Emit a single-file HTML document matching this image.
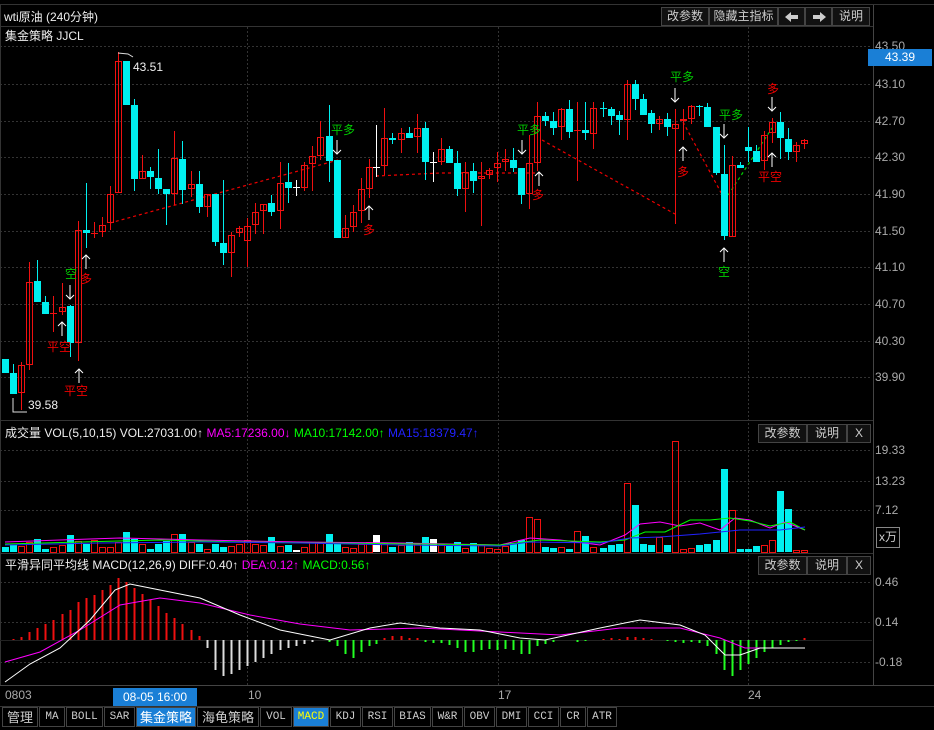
<!DOCTYPE html>
<html><head><meta charset="utf-8"><style>
*{margin:0;padding:0;box-sizing:border-box}
body{width:934px;height:730px;background:#000;overflow:hidden;position:relative;font-family:"Liberation Sans","Noto Sans CJK SC",sans-serif;font-size:12px;color:#ddd}
.a{position:absolute;white-space:nowrap}
.btn{position:absolute;border:1px solid #444;background:#111;color:#ccc;font-size:12px;text-align:center;line-height:17px;height:19px}
.tab{position:absolute;top:707px;height:20px;border:1px solid #444;color:#ccc;font-size:11px;text-align:center;line-height:18px;font-family:"Liberation Mono","Noto Sans CJK SC",monospace}
.ax{position:absolute;left:875px;color:#aaa;font-size:12px}
</style></head><body>
<div class="a" style="left:0;top:4px;width:934px;height:1px;background:#333"></div>
<div class="a" style="left:0;top:26px;width:873px;height:1px;background:#333"></div>
<div class="a" style="left:873px;top:5px;width:1px;height:680px;background:#444"></div>
<div class="a" style="left:0;top:420px;width:873px;height:1px;background:#333"></div>
<div class="a" style="left:0;top:553px;width:873px;height:1px;background:#333"></div>
<div class="a" style="left:0;top:685px;width:934px;height:1px;background:#444"></div>
<div class="a" style="left:0;top:706px;width:934px;height:1px;background:#333"></div>
<div class="a" style="left:0;top:5px;width:1px;height:680px;background:#333"></div>

<div class="a" style="left:4px;top:8px;color:#eee">wti原油 (240分钟)</div>
<div class="btn" style="left:661px;top:7px;width:48px">改参数</div>
<div class="btn" style="left:709px;top:7px;width:69px">隐藏主指标</div>
<div class="btn" style="left:778px;top:7px;width:27px"><svg width="14" height="10" style="margin-top:4px"><path d="M0,5L6,0V3H13V7H6V10Z" fill="#ccc"/></svg></div>
<div class="btn" style="left:805px;top:7px;width:27px"><svg width="14" height="10" style="margin-top:4px"><path d="M14,5L8,0V3H1V7H8V10Z" fill="#ccc"/></svg></div>
<div class="btn" style="left:832px;top:7px;width:38px">说明</div>
<div class="a" style="left:5px;top:27px;color:#eee">集金策略 JJCL</div>

<div class="ax" style="top:39px">43.50</div>
<div class="a" style="left:868px;top:49px;width:64px;height:17px;background:#1a7fd6;color:#fff;text-align:center;line-height:17px">43.39</div>
<div class="ax" style="top:77px">43.10</div>
<div class="ax" style="top:114px">42.70</div>
<div class="ax" style="top:150px">42.30</div>
<div class="ax" style="top:187px">41.90</div>
<div class="ax" style="top:224px">41.50</div>
<div class="ax" style="top:260px">41.10</div>
<div class="ax" style="top:297px">40.70</div>
<div class="ax" style="top:334px">40.30</div>
<div class="ax" style="top:370px">39.90</div>

<div class="a" style="left:5px;top:424px;color:#eee">成交量 VOL(5,10,15) VOL:27031.00↑ <span style="color:#f0f">MA5:17236.00↓</span> <span style="color:#0f0">MA10:17142.00↑</span> <span style="color:#22f">MA15:18379.47↑</span></div>
<div class="btn" style="left:758px;top:424px;width:49px">改参数</div>
<div class="btn" style="left:807px;top:424px;width:40px">说明</div>
<div class="btn" style="left:847px;top:424px;width:24px">X</div>
<div class="ax" style="top:443px">19.33</div>
<div class="ax" style="top:474px">13.23</div>
<div class="ax" style="top:503px">7.12</div>
<div class="a" style="left:876px;top:527px;width:24px;height:21px;border:1px solid #888;color:#ccc;text-align:center;line-height:19px">x万</div>

<div class="a" style="left:5px;top:556px;color:#eee">平滑异同平均线 MACD(12,26,9) DIFF:0.40↑ <span style="color:#f0f">DEA:0.12↑</span> <span style="color:#0f0">MACD:0.56↑</span></div>
<div class="btn" style="left:758px;top:556px;width:49px">改参数</div>
<div class="btn" style="left:807px;top:556px;width:40px">说明</div>
<div class="btn" style="left:847px;top:556px;width:24px">X</div>
<div class="ax" style="top:575px">0.46</div>
<div class="ax" style="top:615px">0.14</div>
<div class="ax" style="top:655px">-0.18</div>

<div class="a" style="left:5px;top:688px;color:#aaa">0803</div>
<div class="a" style="left:113px;top:688px;width:84px;height:18px;background:#1a7fd6;color:#fff;text-align:center;line-height:18px">08-05 16:00</div>
<div class="a" style="left:248px;top:688px;color:#aaa">10</div>
<div class="a" style="left:498px;top:688px;color:#aaa">17</div>
<div class="a" style="left:748px;top:688px;color:#aaa">24</div>

<div class="tab" style="left:2px;width:36px;font-size:13px;font-family:'Noto Sans CJK SC',sans-serif">管理</div>
<div class="tab" style="left:39px;width:26px">MA</div>
<div class="tab" style="left:66px;width:37px">BOLL</div>
<div class="tab" style="left:104px;width:31px">SAR</div>
<div class="tab" style="left:136px;width:60px;background:#1a7fd6;color:#fff;font-size:13px;font-family:'Noto Sans CJK SC',sans-serif">集金策略</div>
<div class="tab" style="left:197px;width:62px;font-size:13px;font-family:'Noto Sans CJK SC',sans-serif">海龟策略</div>
<div class="tab" style="left:260px;width:32px">VOL</div>
<div class="tab" style="left:293px;width:36px;background:#1a7fd6;color:#ff0">MACD</div>
<div class="tab" style="left:330px;width:31px">KDJ</div>
<div class="tab" style="left:362px;width:31px">RSI</div>
<div class="tab" style="left:394px;width:37px">BIAS</div>
<div class="tab" style="left:432px;width:31px">W&amp;R</div>
<div class="tab" style="left:464px;width:31px">OBV</div>
<div class="tab" style="left:496px;width:31px">DMI</div>
<div class="tab" style="left:528px;width:31px">CCI</div>
<div class="tab" style="left:560px;width:26px">CR</div>
<div class="tab" style="left:587px;width:30px">ATR</div>

<svg class="a" style="left:0;top:0" width="934" height="730" id="s">
<g stroke="#333" stroke-dasharray="2,2" stroke-width="1">
<line x1="0" y1="46.5" x2="872" y2="46.5"/><line x1="0" y1="84.5" x2="872" y2="84.5"/><line x1="0" y1="121.5" x2="872" y2="121.5"/><line x1="0" y1="157.5" x2="872" y2="157.5"/><line x1="0" y1="194.5" x2="872" y2="194.5"/><line x1="0" y1="231.5" x2="872" y2="231.5"/><line x1="0" y1="267.5" x2="872" y2="267.5"/><line x1="0" y1="304.5" x2="872" y2="304.5"/><line x1="0" y1="341.5" x2="872" y2="341.5"/><line x1="0" y1="377.5" x2="872" y2="377.5"/>
<line x1="247.5" y1="27" x2="247.5" y2="685"/><line x1="498.5" y1="27" x2="498.5" y2="685"/><line x1="748.5" y1="27" x2="748.5" y2="685"/>
<line x1="0" y1="450.5" x2="872" y2="450.5"/><line x1="0" y1="481.5" x2="872" y2="481.5"/><line x1="0" y1="510.5" x2="872" y2="510.5"/>
<line x1="0" y1="582.5" x2="872" y2="582.5"/><line x1="0" y1="622.5" x2="872" y2="622.5"/><line x1="0" y1="662.5" x2="872" y2="662.5"/>
</g>
<g fill="none" stroke-dasharray="3,3" stroke-width="1.2">
<polyline stroke="#e00" points="110,223 338,160"/>
<polyline stroke="#e00" points="376,176 440,173 540,173"/>
<polyline stroke="#e00" points="542,140 675,214"/>
<polyline stroke="#e00" points="683,122 725,200"/>
<polyline stroke="#0c0" points="725,200 772,128"/>
</g>
<g id="c"></g>
<g font-family="Noto Sans CJK SC,sans-serif" font-size="12">
<text x="133" y="71" fill="#eee" font-family="Liberation Sans">43.51</text>
<text x="28" y="409" fill="#eee" font-family="Liberation Sans">39.58</text>
<polyline points="13,398 13,412 27,412" stroke="#ddd" fill="none"/>
<polyline points="118,53 128,54 133,57" stroke="#ddd" fill="none"/>
<text x="47" y="351" fill="#e00">平空</text>
<text x="64" y="395" fill="#e00">平空</text>
<text x="65" y="278" fill="#0c0">空</text>
<text x="80" y="283" fill="#e00">多</text>
<text x="331" y="134" fill="#0c0">平多</text>
<text x="363" y="234" fill="#e00">多</text>
<text x="517" y="134" fill="#0c0">平多</text>
<text x="532" y="199" fill="#e00">多</text>
<text x="670" y="81" fill="#0c0">平多</text>
<text x="677" y="176" fill="#e00">多</text>
<text x="719" y="119" fill="#0c0">平多</text>
<text x="718" y="276" fill="#0c0">空</text>
<text x="767" y="93" fill="#e00">多</text>
<text x="758" y="181" fill="#e00">平空</text>
</g>
<g stroke="#fff" fill="none" stroke-width="1">
<path d="M62,336v-14M58,326l4,-4l4,4"/><path d="M79,383v-14M75,373l4,-4l4,4"/>
<path d="M70,285v14M66,295l4,4l4,-4"/><path d="M86,269v-14M82,259l4,-4l4,4"/>
<path d="M337,140v14M333,150l4,4l4,-4"/><path d="M369,220v-14M365,210l4,-4l4,4"/>
<path d="M522,140v14M518,150l4,4l4,-4"/><path d="M539,186v-14M535,176l4,-4l4,4"/>
<path d="M675,88v14M671,98l4,4l4,-4"/><path d="M683,161v-14M679,151l4,-4l4,4"/>
<path d="M724,124v14M720,134l4,4l4,-4"/><path d="M724,262v-14M720,252l4,-4l4,4"/>
<path d="M772,97v14M768,107l4,4l4,-4"/><path d="M772,167v-14M768,157l4,-4l4,4"/>
</g>
<line x1="0" y1="640.5" x2="872" y2="640.5" stroke="#222"/>
<g id="v"></g>
<g id="m"></g>
<polyline fill="none" stroke="#f0f" points="5,542 60,540 120,538 200,540 300,542 400,543 500,545 530,538 560,540 600,545 625,535 640,524 660,522 680,526 700,523 720,530 735,518 750,520 770,528 785,522 805,530"/>
<polyline fill="none" stroke="#0f0" points="5,544 80,542 160,540 240,542 320,543 420,544 500,545 540,540 600,542 625,540 645,532 665,532 690,520 710,520 730,518 750,521 770,526 790,522 805,530"/>
<polyline fill="none" stroke="#22f" points="5,545 100,543 200,542 300,543 400,545 500,546 530,542 600,543 630,538 660,537 700,534 740,530 780,530 805,527"/>
<polyline fill="none" stroke="#f0f" points="5,662 40,652 80,630 120,605 160,598 200,603 250,615 300,624 350,630 420,628 500,632 560,635 620,628 680,628 720,638 745,648 780,648 805,648"/>
<polyline fill="none" stroke="#fff" points="5,682 30,664 60,648 90,620 115,590 130,584 160,590 200,598 240,615 280,630 330,640 370,628 400,623 440,628 480,630 520,638 545,640 600,628 640,620 680,625 705,635 725,655 740,655 760,648 805,648"/>
</svg>
<script>
var C=[[5,359,373,359,373,'c'],[13,373,394,364,394,'c'],[21,365,393,362,410,'r'],[29,282,365,262,370,'r'],[37,281,302,260,302,'c'],[45,302,314,296,314,'c'],[53,313,313,296,332,'x'],[62,307,312,283,315,'r'],[70,306,343,305,357,'c'],[78,230,343,221,361,'r'],[86,230,233,183,248,'c'],[94,233,233,222,238,'x'],[102,225,232,217,237,'r'],[110,194,223,186,230,'r'],[118,61,193,52,193,'r'],[126,61,105,61,105,'c'],[134,105,179,99,191,'c'],[142,171,179,155,179,'r'],[150,171,177,167,189,'c'],[158,178,189,149,194,'c'],[166,189,194,189,225,'c'],[174,158,194,131,205,'r'],[182,159,190,141,204,'c'],[191,184,189,171,197,'r'],[199,184,207,171,213,'c'],[207,194,207,194,217,'r'],[215,194,242,194,246,'c'],[223,243,253,180,265,'c'],[231,235,253,232,277,'r'],[239,228,233,226,237,'r'],[247,226,241,218,267,'r'],[255,212,225,203,234,'r'],[263,204,211,204,234,'r'],[271,203,212,195,216,'c'],[280,183,211,162,229,'r'],[288,182,188,163,203,'c'],[296,187,187,180,196,'w'],[304,165,188,162,191,'r'],[312,156,164,146,191,'r'],[320,137,156,121,160,'r'],[329,136,161,105,182,'c'],[337,160,238,160,238,'c'],[345,228,238,215,238,'r'],[353,212,227,205,232,'r'],[361,189,211,178,223,'r'],[369,167,189,159,198,'r'],[376,167,167,125,177,'w'],[384,138,166,108,175,'r'],[392,138,140,133,144,'c'],[401,133,140,128,153,'r'],[409,133,138,127,138,'c'],[417,128,137,114,153,'r'],[425,128,162,122,180,'c'],[433,162,162,152,182,'w'],[441,149,162,138,165,'r'],[449,149,163,146,163,'c'],[457,163,189,151,196,'c'],[465,172,189,162,212,'r'],[473,171,181,163,193,'c'],[481,176,179,162,226,'r'],[489,170,175,168,179,'r'],[497,163,168,152,182,'r'],[505,159,162,149,171,'r'],[513,160,168,148,172,'c'],[521,168,195,168,204,'c'],[529,163,194,135,209,'r'],[537,116,163,102,171,'r'],[545,116,121,112,126,'c'],[553,121,128,112,135,'c'],[561,109,127,108,140,'r'],[569,109,132,100,138,'c'],[577,130,130,102,181,'x'],[585,130,133,102,140,'c'],[593,108,134,102,149,'r'],[603,108,108,102,117,'y'],[611,109,116,107,125,'c'],[619,115,120,111,135,'c'],[627,84,120,80,140,'r'],[635,84,99,80,110,'c'],[643,99,115,94,115,'c'],[651,113,124,110,133,'c'],[659,119,124,116,130,'r'],[667,119,127,113,136,'c'],[675,124,129,109,224,'r'],[683,119,121,109,140,'r'],[691,106,119,105,124,'r'],[699,106,106,105,116,'y'],[707,107,127,103,127,'c'],[716,127,173,127,175,'c'],[724,174,236,145,240,'c'],[732,165,237,156,237,'r'],[740,165,168,162,168,'c'],[748,147,151,127,162,'c'],[756,151,162,145,162,'c'],[764,135,161,131,170,'r'],[772,122,133,118,143,'r'],[780,122,138,112,159,'c'],[788,139,152,128,160,'c'],[796,145,152,142,162,'r'],[804,140,144,139,149,'r']];
var V=[5,7,6,10,13,3,5,7,17,11,8,12,5,5,10,20,13,8,3,8,11,18,18,10,8,3,8,5,6,8,12,8,7,15,6,7,2,5,10,9,18,10,5,4,8,10,17,9,5,7,10,8,15,13,8,7,10,4,9,7,4,3,6,9,12,35,33,5,4,5,3,21,16,5,4,7,8,69,47,8,7,15,7,111,3,4,7,8,12,83,42,3,3,6,7,12,61,43,2,2];
var NS='http://www.w3.org/2000/svg';
function el(p,t,a){var e=document.createElementNS(NS,t);for(var k in a)e.setAttribute(k,a[k]);p.appendChild(e);return e;}
var g=document.getElementById('c'),gv=document.getElementById('v'),gm=document.getElementById('m');
var R='#f01010',CY='#00f0f0';
C.forEach(function(c,i){var x=c[0],t=c[5];var col=t=='c'||t=='y'?CY:t=='w'?'#fff':R;
el(g,'line',{x1:x+.5,y1:c[3],x2:x+.5,y2:c[4],stroke:col});
if(t=='c')el(g,'rect',{x:x-3,y:c[1],width:7,height:Math.max(1,c[2]-c[1]),fill:CY});
else if(t=='r')el(g,'rect',{x:x-2.5,y:c[1]+.5,width:6,height:Math.max(1,c[2]-c[1]-1),fill:'none',stroke:R});
else el(g,'line',{x1:x-3,y1:c[1]+.5,x2:x+4,y2:c[1]+.5,stroke:col});
var h=V[i]||3;var vc=t=='c'||t=='y'?'c':t=='w'?'w':'r';
if(vc=='r')el(gv,'rect',{x:x-2.5,y:552.5-h,width:6,height:h,fill:'none',stroke:R});
else el(gv,'rect',{x:x-3,y:552-h,width:7,height:h,fill:vc=='c'?CY:'#fff'});
});
var M=[[5,0],[13,1],[21,3],[29,8],[37,12],[45,16],[53,20],[62,26],[70,30],[78,38],[86,42],[94,45],[102,50],[110,55],[118,62],[126,58],[134,52],[142,46],[150,40],[158,34],[166,27],[174,22],[182,16],[191,10],[199,4],[207,-8],[215,-30],[223,-36],[231,-34],[239,-30],[247,-26],[255,-22],[263,-18],[271,-14],[280,-10],[288,-8],[296,-6],[304,-4],[312,-2],[320,0],[329,-2],[337,-6],[345,-14],[353,-18],[361,-12],[369,-6],[376,-4],[384,2],[392,4],[401,4],[409,2],[417,2],[425,-2],[433,-3],[441,-3],[449,-5],[457,-8],[465,-12],[473,-12],[481,-10],[489,-9],[497,-10],[505,-9],[513,-10],[521,-14],[529,-14],[537,-6],[545,-4],[553,-2],[561,0],[569,0],[577,-2],[585,-1],[593,0],[603,1],[611,2],[619,1],[627,3],[635,3],[643,2],[651,1],[659,0],[667,-1],[675,-2],[683,-3],[691,-2],[699,-3],[707,-6],[716,-14],[724,-30],[732,-36],[740,-30],[748,-24],[756,-18],[764,-12],[772,-8],[780,-5],[788,-2],[796,-1],[804,2]];
M.forEach(function(m){var v=m[1];var col=v>0?R:(m[0]>190&&m[0]<320?'#ddd':'#2f2');
el(gm,'line',{x1:m[0]+.5,y1:640,x2:m[0]+.5,y2:640-v,stroke:col,'stroke-width':2});});
</script>
</body></html>
